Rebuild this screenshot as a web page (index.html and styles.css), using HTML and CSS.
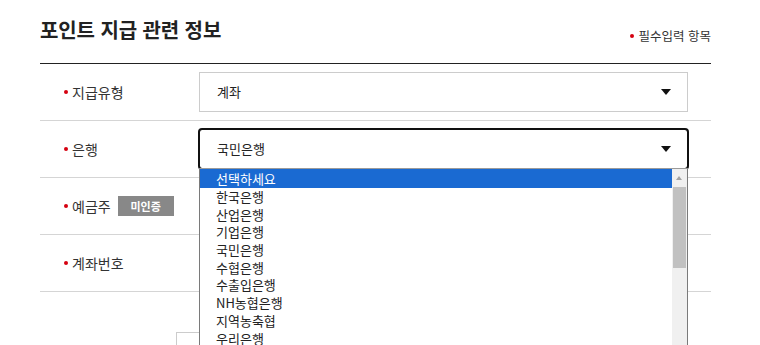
FILE: index.html
```html
<!DOCTYPE html>
<html lang="ko">
<head>
    <meta charset="UTF-8">
    <meta name="viewport" content="width=device-width, initial-scale=1.0">
    <title>포인트 지급 관련 정보</title>
    <link rel="stylesheet" href="styles.css">
</head>
<body>
    <div class="wrap">
        <!-- Header -->
        <div class="head">
            <h2 class="title">포인트 지급 관련 정보</h2>
            <p class="req"><span class="dot"></span>필수입력 항목</p>
        </div>

        <!-- Form rows -->
        <div class="form">
            <div class="row">
                <div class="label"><span class="dot"></span>지급유형</div>
                <div class="field">
                    <div class="select">계좌<span class="arrow"></span></div>
                </div>
            </div>

            <div class="row">
                <div class="label"><span class="dot"></span>은행</div>
                <div class="field">
                    <div class="select is-open">국민은행<span class="arrow"></span>
                        <ul class="listbox">
                            <li class="selected">선택하세요</li>
                            <li>한국은행</li>
                            <li>산업은행</li>
                            <li>기업은행</li>
                            <li>국민은행</li>
                            <li>수협은행</li>
                            <li>수출입은행</li>
                            <li>NH농협은행</li>
                            <li>지역농축협</li>
                            <li>우리은행</li>
                        </ul>
                        <div class="scrollbar">
                            <span class="up"></span>
                            <span class="thumb"></span>
                        </div>
                    </div>
                </div>
            </div>

            <div class="row">
                <div class="label"><span class="dot"></span>예금주<span class="badge">미인증</span></div>
                <div class="field">
                    <input type="text" class="input">
                </div>
            </div>

            <div class="row">
                <div class="label"><span class="dot"></span>계좌번호</div>
                <div class="field">
                    <input type="text" class="input">
                </div>
            </div>
        </div>

        <!-- Buttons (under the open list) -->
        <div class="btns">
            <span class="btn"></span>
            <span class="btn"></span>
        </div>
    </div>
</body>
</html>
```

FILE: styles.css
```css
body {
    margin: 0;
    font-family: "Noto Sans CJK KR", "Noto Sans", sans-serif;
    color: #333;
    background: #fff;
    overflow: hidden;
}

.wrap {
    width: 671px;
    margin-left: 40px;
}

.head {
    display: flex;
    justify-content: space-between;
    align-items: flex-end;
    height: 63px;
    border-bottom: 1px solid #222;
}

.title {
    margin: 0 0 21px;
    font-size: 20px;
    line-height: 24px;
    font-weight: bold;
    color: #222;
    letter-spacing: -0.1px;
}

.req {
    margin: 0 0 19px;
    font-size: 12.5px;
    line-height: 16px;
    color: #333;
}

.dot {
    display: inline-block;
    width: 4px;
    height: 4px;
    border-radius: 50%;
    background: #d50010;
    margin-right: 4px;
    vertical-align: middle;
    position: relative;
    top: -2px;
}

.row {
    display: flex;
    align-items: center;
    height: 56px;
    border-bottom: 1px solid #d5d5d5;
}

.label {
    width: 135px;
    padding-left: 24px;
    font-size: 14px;
    line-height: 20px;
    color: #333;
    display: flex;
    align-items: center;
}

.label .dot {
    top: 0;
    margin-right: 4px;
}

.badge {
    display: inline-block;
    margin-left: 7px;
    width: 56px;
    height: 20px;
    line-height: 20px;
    text-align: center;
    background: #888;
    color: #fff;
    font-size: 11px;
    font-weight: bold;
}

.field {
    flex: 1;
    padding-right: 23px;
}

.select {
    position: relative;
    box-sizing: border-box;
    height: 40px;
    padding-left: 17px;
    border: 1px solid #ccc;
    font-size: 13px;
    line-height: 38px;
    color: #222;
}

.select.is-open {
    border-color: #999;
    border-radius: 3px;
    outline: 2px solid #111;
    outline-offset: -1px;
}

.arrow {
    position: absolute;
    right: 16px;
    top: 16px;
    width: 0;
    height: 0;
    border-left: 5px solid transparent;
    border-right: 5px solid transparent;
    border-top: 6px solid #111;
}

.listbox {
    position: absolute;
    left: -1px;
    top: 38px;
    width: 489px;
    box-sizing: border-box;
    margin: 0;
    padding: 0;
    list-style: none;
    background: #fff;
    border: 1px solid #7a7a7a;
    border-top-color: #9a9a9a;
    z-index: 5;
    height: 180px;
    overflow: hidden;
}

.listbox li {
    height: 17.7px;
    line-height: 17.7px;
    padding-left: 16px;
    font-size: 13px;
    color: #222;
}

.listbox li.selected {
    background: #1a6ad2;
    color: #fff;
    height: 19px;
    line-height: 19px;
}

.scrollbar {
    position: absolute;
    right: 0;
    top: 39px;
    width: 15px;
    height: 178px;
    background: #f0f0f0;
    z-index: 6;
}

.scrollbar .up {
    position: absolute;
    left: 4px;
    top: 7px;
    width: 0;
    height: 0;
    border-left: 3.5px solid transparent;
    border-right: 3.5px solid transparent;
    border-bottom: 4px solid #a3a3a3;
}

.scrollbar .thumb {
    position: absolute;
    left: 1px;
    top: 18px;
    width: 13px;
    height: 81px;
    background: #c1c1c1;
}

.input {
    display: block;
    box-sizing: border-box;
    width: 100%;
    height: 40px;
    border: 1px solid #ccc;
}

.btns {
    display: flex;
    justify-content: center;
    gap: 8px;
    margin-top: 40px;
}

.btn {
    box-sizing: border-box;
    width: 196px;
    height: 48px;
    border: 1px solid #ccc;
    background: #fff;
}
```
